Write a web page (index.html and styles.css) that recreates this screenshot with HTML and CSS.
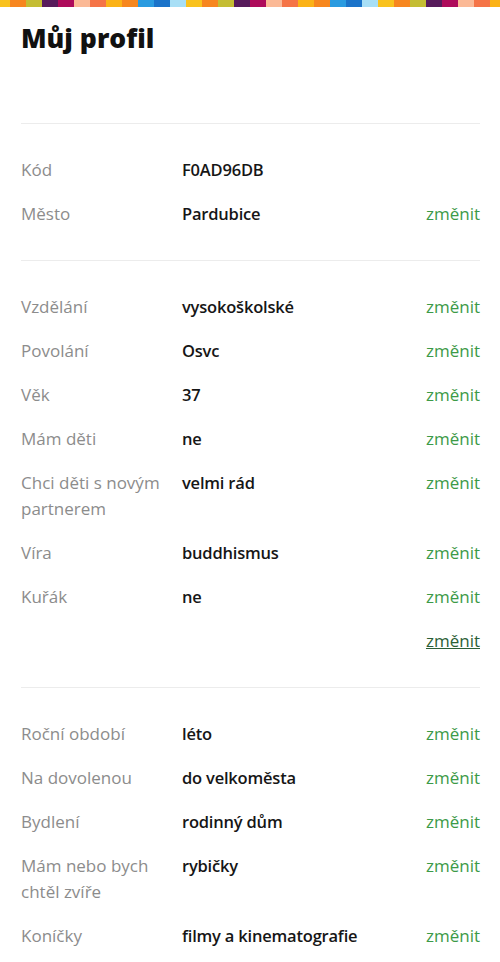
FILE: index.html
```html
<!DOCTYPE html>
<html lang="cs">
<head>
<meta charset="utf-8">
<title>Můj profil</title>
<link rel="stylesheet" href="styles.css">
</head>
<body>
<div class="stripe"></div>
<main class="page">
  <h1 class="title">Můj profil</h1>

  <section class="section">
    <div class="row"><div class="label">Kód</div><div class="value">F0AD96DB</div><div class="action"></div></div>
    <div class="row"><div class="label">Město</div><div class="value">Pardubice</div><a class="action link" href="#">změnit</a></div>
  </section>

  <section class="section">
    <div class="row"><div class="label">Vzdělání</div><div class="value">vysokoškolské</div><a class="action link" href="#">změnit</a></div>
    <div class="row"><div class="label">Povolání</div><div class="value">Osvc</div><a class="action link" href="#">změnit</a></div>
    <div class="row"><div class="label">Věk</div><div class="value">37</div><a class="action link" href="#">změnit</a></div>
    <div class="row"><div class="label">Mám děti</div><div class="value">ne</div><a class="action link" href="#">změnit</a></div>
    <div class="row"><div class="label">Chci děti s novým partnerem</div><div class="value">velmi rád</div><a class="action link" href="#">změnit</a></div>
    <div class="row"><div class="label">Víra</div><div class="value">buddhismus</div><a class="action link" href="#">změnit</a></div>
    <div class="row"><div class="label">Kuřák</div><div class="value">ne</div><a class="action link" href="#">změnit</a></div>
    <div class="row row-end"><a class="link link-all" href="#">změnit</a></div>
  </section>

  <section class="section">
    <div class="row"><div class="label">Roční období</div><div class="value">léto</div><a class="action link" href="#">změnit</a></div>
    <div class="row"><div class="label">Na dovolenou</div><div class="value">do velkoměsta</div><a class="action link" href="#">změnit</a></div>
    <div class="row"><div class="label">Bydlení</div><div class="value">rodinný dům</div><a class="action link" href="#">změnit</a></div>
    <div class="row"><div class="label">Mám nebo bych chtěl zvíře</div><div class="value">rybičky</div><a class="action link" href="#">změnit</a></div>
    <div class="row"><div class="label">Koníčky</div><div class="value">filmy a kinematografie</div><a class="action link" href="#">změnit</a></div>
  </section>
</main>
</body>
</html>
```
FILE: styles.css
```css
* { box-sizing: border-box; }
html, body { margin: 0; padding: 0; background: #fff; }
body {
  font-family: "Open Sans", "Noto Sans", "DejaVu Sans", sans-serif;
  color: #1a1a1a;
  font-size: 17px;
}
.stripe {
  height: 7px;
  background-image: linear-gradient(to right,
    #f9c21e 0 16px, #f7861f 16px 32px, #c4bd33 32px 48px, #571b5b 48px 64px,
    #ae0b5b 64px 80px, #fbb996 80px 96px, #f57447 96px 112px, #fbb217 112px 128px,
    #f7871e 128px 144px, #2a9be0 144px 160px, #1b73c9 160px 176px, #a8dff6 176px 192px);
  background-size: 192px 7px;
  background-position: -6px 0;
  background-repeat: repeat-x;
}
.page { padding: 0 20px 0 21px; }
.title {
  margin: 0;
  padding: 16px 0 70px;
  font-size: 26.5px;
  line-height: 30px;
  font-weight: 800;
  color: #111;
}
.section {
  border-top: 1px solid #ececec;
  padding: 24px 0 24px;
}
.row {
  display: grid;
  grid-template-columns: 161px 1fr auto;
  padding: 9px 0;
  line-height: 26px;
}
.label { color: #8c8c8c; padding-right: 14px; }
.value { color: #161616; font-weight: 600; font-size: 16.5px; letter-spacing: -0.2px; }
.link {
  color: #3c9a48;
  text-decoration: none;
}
.row-end { display: flex; justify-content: flex-end; }
.link-all { color: #2c5f37; text-decoration: underline; }
```
